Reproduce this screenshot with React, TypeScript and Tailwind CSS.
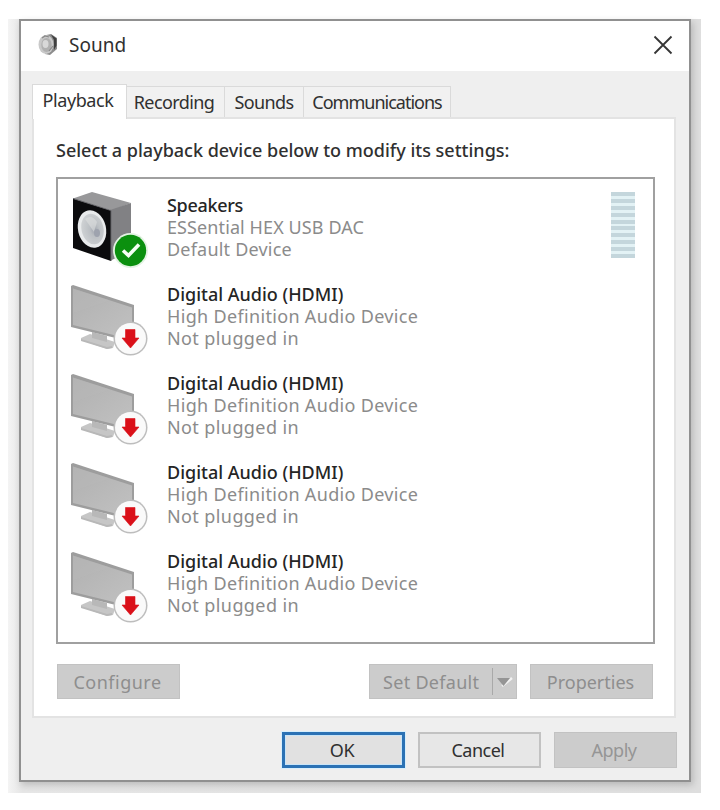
import React from "react";

function SoundIcon() {
  return (
    <svg width="22" height="24" viewBox="0 0 22 24" className="block">
      <path d="M7 2.5 14 1 20 5v11l-7 6-5-1z" fill="#8d8d8d" />
      <path d="M14 1.5 19.5 5.5v7L17 17V7z" fill="#404040" />
      <ellipse cx="9" cy="11.5" rx="7.5" ry="9.5" fill="#c9c9c9" />
      <ellipse cx="9.5" cy="12" rx="5.2" ry="7" fill="#b0b0b0" />
      <ellipse cx="8.5" cy="11" rx="3" ry="4" fill="#d8d8d8" />
      <path d="M5 5l3-2 4 1M12 18l4-5" stroke="#888" strokeWidth="1.2" fill="none" />
    </svg>
  );
}

function SpeakerIcon() {
  return (
    <svg width="78" height="78" viewBox="0 0 78 78" className="block">
      <defs>
        <radialGradient id="cone" cx="0.58" cy="0.55" r="0.6">
          <stop offset="0" stopColor="#a0a5ae" />
          <stop offset="0.35" stopColor="#bcc0c4" />
          <stop offset="1" stopColor="#cfd2d4" />
        </radialGradient>
      </defs>
      <path d="M3 8.5 22 2 61 13 42 20.5z" fill="#98989a" />
      <path d="M40 20 61 13V60L40 71z" fill="#818184" />
      <path d="M3 8.5 41 20.5V71L3 58z" fill="#0b0b0d" />
      <path d="M3 8.5 41 20.5V71" fill="none" stroke="#66666a" strokeWidth="1" />
      <ellipse cx="22" cy="39" rx="14" ry="19" transform="rotate(-13 22 39)" fill="#e9ebec" />
      <ellipse cx="22.5" cy="39" rx="11" ry="15.5" transform="rotate(-13 22.5 39)" fill="url(#cone)" />
      <path d="M15 29q7-5 12 3l-3 10z" fill="#dddfe0" opacity=".6" />
      <ellipse cx="27" cy="43" rx="3" ry="4" fill="#9ea3ae" />
      <circle cx="60.5" cy="60.5" r="17.5" fill="#e3f3e3" />
      <circle cx="60.5" cy="60.5" r="15.7" fill="#0b900f" />
      <path d="M53 60.5 58.5 65.5 69 54.5" fill="none" stroke="#f5fff5" strokeWidth="3.6" />
    </svg>
  );
}

function MonitorIcon() {
  return (
    <svg width="78" height="78" viewBox="0 0 78 78" className="block">
      <defs>
        <linearGradient id="screen" x1="0" x2="0.8" y1="0" y2="1">
          <stop offset="0" stopColor="#b0b0b0" />
          <stop offset="1" stopColor="#c0c0c0" />
        </linearGradient>
      </defs>
      <path d="M11 59 20 55 45 63 43 69 37 70 11 61z" fill="#c6c6c6" />
      <path d="M11 60v2l26 8 5-1v-2l-5 1z" fill="#b8b8b8" />
      <path d="M22 53 37 57V63L22 59z" fill="#b8b8b8" />
      <path d="M1 7 3 6 64 26V60L62 63 1 48z" fill="#9d9d9d" />
      <path d="M3 9.5 62 28.5V60.5L3 46z" fill="url(#screen)" />
      <path d="M3 9.5 40 21.5 3 34z" fill="#b9b9b9" opacity=".4" />
      <circle cx="60.5" cy="59.5" r="17" fill="#bdbdbd" />
      <circle cx="60.5" cy="59.5" r="15.5" fill="#fafafa" />
      <path d="M55.5 50.500h9.5v8.500h4L60.500 69 52 59h3.500z" fill="#da1019" stroke="#da1019" strokeWidth=".6" strokeLinejoin="round" />
    </svg>
  );
}

const devices = [
  { name: "Speakers", nameGap: "tracking-[-0.3px]", detail: "ESSential HEX USB DAC", detailGap: "tracking-[0.1px]", status: "Default Device", statusGap: "tracking-[0.2px]", speaker: true },
  ...Array.from({ length: 4 }, () => ({
    name: "Digital Audio (HDMI)", nameGap: "tracking-[0px]", detail: "High Definition Audio Device", detailGap: "tracking-[0.33px]", status: "Not plugged in", statusGap: "tracking-[0.4px]", speaker: false,
  })),
];

function Tab({ className, children }: { className: string; children: React.ReactNode }) {
  return (
    <div className={`flex h-[31px] items-center justify-center whitespace-nowrap border border-b-0 border-l-0 border-[#dadada] bg-[#f1f1f1] ${className}`}>
      {children}
    </div>
  );
}

export default function App() {
  return (
    <div className="h-[810px] w-[720px] overflow-hidden bg-white pl-[8px] pt-[19px] font-['Noto_Sans','Open_Sans',sans-serif] text-[18px] leading-[22px] text-[#303030]">
      <div className="h-[774px] w-[693px] bg-linear-to-r from-[#f4f4f4] from-0% via-[#e6e6e6] via-2% to-[#dedede] pl-[11px]">
        <div className="flex h-[763px] w-[672px] flex-col border-2 border-[#909090] bg-[#efefef] shadow-[2px_3px_7px_rgba(0,0,0,0.18)]">
          <header className="flex h-[50px] shrink-0 items-center bg-white pb-[3px] pl-[16px] pr-[16px]">
            <SoundIcon />
            <span className="ml-[10px] mt-px text-[19px] tracking-[0px]">Sound</span>
            <svg width="20" height="20" viewBox="0 0 20 20" className="ml-auto block">
              <path d="M1.5 1.5 18.5 18.5M18.5 1.5 1.5 18.5" stroke="#353535" strokeWidth="1.8" />
            </svg>
          </header>

          <nav className="mt-[13px] flex h-[33px] shrink-0 items-end pl-[11px]">
            <div className="relative z-10 -mb-[2px] flex h-[35px] w-[95px] items-center justify-center border border-b-0 border-[#dadada] bg-white pb-[4px] pr-[3px] tracking-[-0.4px]">Playback</div>
            <Tab className="w-[98px] pr-[3px] tracking-[-0.6px]">Recording</Tab>
            <Tab className="w-[79px] tracking-[-0.6px]">Sounds</Tab>
            <Tab className="w-[147px] tracking-[-1px]">Communications</Tab>
          </nav>

          <main className="ml-[11px] flex h-[601px] w-[644px] shrink-0 flex-col border-2 border-[#e3e3e3] bg-white pl-[22px]">
            <p className="mt-[20px] font-medium">Select a playback device below to modify its settings:</p>
            <div className="mt-[16px] h-[467px] w-[599px] shrink-0 border-2 border-[#a0a0a0] pl-[13px] pt-[12px]">
              {devices.map((d, i) => (
                <div key={i} className="flex h-[89px]">
                  <div className="-ml-px -mt-px">{d.speaker ? <SpeakerIcon /> : <MonitorIcon />}</div>
                  <div className="ml-[19px] mt-[3px] whitespace-nowrap text-[#8b8b8b]">
                    <div className={`font-medium text-[#252525] ${d.nameGap}`}>{d.name}</div>
                    <div className={d.detailGap}>{d.detail}</div>
                    <div className={d.statusGap}>{d.status}</div>
                  </div>
                  {d.speaker && (
                    <div className="ml-auto mr-[18px] mt-px flex h-[66px] flex-col justify-between bg-[#e3f2f5]">
                      {Array.from({ length: 10 }, (_, n) => (
                        <div key={n} className="h-[4px] w-[24px] bg-[#c4d6dc]" />
                      ))}
                    </div>
                  )}
                </div>
              ))}
            </div>
            <div className="mt-[20px] flex h-[35px] w-[597px] pl-px text-[#8e8e8e]">
              <div className="flex w-[123px] items-center justify-center border border-[#c2c2c2] bg-[#cccccc] pr-[2px] tracking-[0.5px]">Configure</div>
              <div className="ml-auto flex w-[148px] items-center whitespace-nowrap border border-[#c2c2c2] bg-[#cccccc] pl-[13px] tracking-[0.3px]">
                Set Default
                <div className="ml-auto flex h-[27px] w-[24px] items-center border-l border-[#a9a9a9]">
                  <svg width="22" height="18" viewBox="0 0 22 18">
                    <path d="M9 13 19 5" stroke="#f2f2f2" strokeWidth="2.5" fill="none" />
                    <path d="M4 5h13l-6.5 8z" fill="#959595" />
                  </svg>
                </div>
              </div>
              <div className="ml-[13px] flex w-[123px] items-center justify-center border border-[#c2c2c2] bg-[#cccccc] pr-[2px]">Properties</div>
            </div>
          </main>

          <footer className="mt-[14px] flex h-[36px] justify-end gap-[13px] pr-[12px]">
            <div className="flex w-[123px] items-center justify-center border-[3px] border-[#2b72b5] bg-[#e1e1e1] pr-[3px] tracking-[-0.3px] shadow-[inset_0_0_0_1px_#c9e5f8,0_0_0_1px_#d8effc]">OK</div>
            <div className="flex w-[123px] items-center justify-center border-2 border-[#c2c2c2] bg-[#e7e7e7] pr-[3px] tracking-[-0.5px]">Cancel</div>
            <div className="flex w-[123px] items-center justify-center border border-[#c2c2c2] bg-[#cccccc] pr-[3px] tracking-[-0.5px] text-[#959595]">Apply</div>
          </footer>
        </div>
      </div>
    </div>
  );
}
